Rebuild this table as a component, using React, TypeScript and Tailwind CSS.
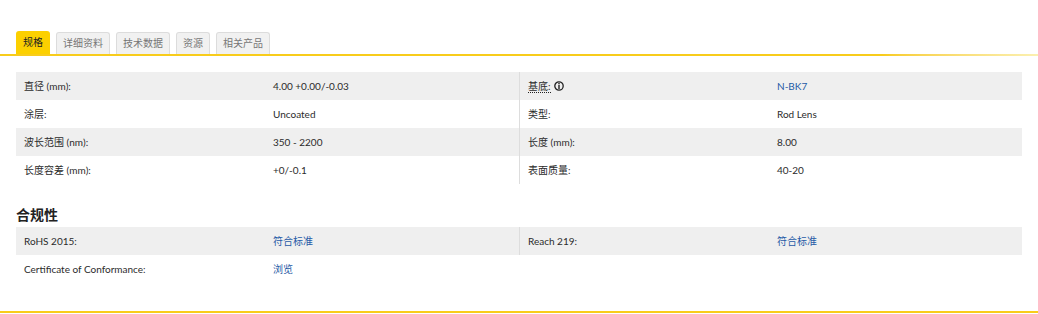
import React from "react";

const font = { fontFamily: "Lato, 'Noto Sans CJK SC', sans-serif" };

function InfoIcon() {
  return (
    <svg width="10" height="10" viewBox="0 0 10 10" className="inline-block ml-[3px] -mt-[1px]">
      <circle cx="5" cy="5" r="4.2" fill="none" stroke="#222" strokeWidth="1.3" />
      <rect x="4.3" y="2" width="1.4" height="1.3" fill="#222" />
      <rect x="4.3" y="4" width="1.4" height="4" fill="#222" />
    </svg>
  );
}

type Cell = { label: React.ReactNode; value: string; link?: boolean };

function Row({ left, right, gray }: { left: Cell; right?: Cell; gray: boolean }) {
  return (
    <div className={`flex h-[28px] items-center text-[10px] text-[#2b2b2b] ${gray ? "bg-[#efefef]" : ""}`}>
      <div className="flex w-[503px] items-center">
        <div className="w-[249px] pl-2">{left.label}</div>
        <div className={`pl-2 ${left.link ? "text-[#1f5aa6]" : ""}`}>{left.value}</div>
      </div>
      {right && (
        <div className="flex h-full flex-1 items-center border-l border-[#ddd]">
          <div className="w-[249px] pl-2">{right.label}</div>
          <div className={`pl-2 ${right.link ? "text-[#1f5aa6]" : ""}`}>{right.value}</div>
        </div>
      )}
    </div>
  );
}

export default function App() {
  const tabs = ["详细资料", "技术数据", "资源", "相关产品"];
  return (
    <div className="h-[314px] w-[1038px] bg-white" style={font}>
      <div className="flex items-end gap-[6px] px-4 pt-[31px]">
        <div className="flex h-[23px] items-center rounded-t-[3px] bg-[#fcd000] px-[7px] text-[10px] text-[#222]">规格</div>
        {tabs.map((t) => (
          <div key={t} className="flex h-[22px] items-center rounded-t-[3px] border border-b-0 border-[#dcdcdc] bg-[#f1f1f1] px-[6px] text-[10px] text-[#777]">
            {t}
          </div>
        ))}
      </div>
      <div className="h-[2px] w-full bg-gradient-to-r from-[#f8cc1b] from-[85%] to-[#fbf0b0]" />
      <div className="px-4 pt-[16px]">
        <Row gray left={{ label: "直径 (mm):", value: "4.00 +0.00/-0.03" }} right={{ label: <span><span className="border-b border-dotted border-[#222]">基底:</span><InfoIcon /></span>, value: "N-BK7", link: true }} />
        <Row gray={false} left={{ label: "涂层:", value: "Uncoated" }} right={{ label: "类型:", value: "Rod Lens" }} />
        <Row gray left={{ label: "波长范围 (nm):", value: "350 - 2200" }} right={{ label: "长度 (mm):", value: "8.00" }} />
        <Row gray={false} left={{ label: "长度容差 (mm):", value: "+0/-0.1" }} right={{ label: "表面质量:", value: "40-20" }} />
        <div className="pt-[21px] pb-[3px] text-[14px] font-semibold leading-[19px] text-[#222]">合规性</div>
        <Row gray left={{ label: "RoHS 2015:", value: "符合标准", link: true }} right={{ label: "Reach 219:", value: "符合标准", link: true }} />
        <div className="flex h-[28px] items-center text-[10px] text-[#2b2b2b]">
          <div className="w-[249px] pl-2">Certificate of Conformance:</div>
          <div className="pl-2 text-[#1f5aa6]">浏览</div>
        </div>
      </div>
      <div className="mt-[28px] h-[2px] w-full bg-[#f8cc1b]" />
    </div>
  );
}
